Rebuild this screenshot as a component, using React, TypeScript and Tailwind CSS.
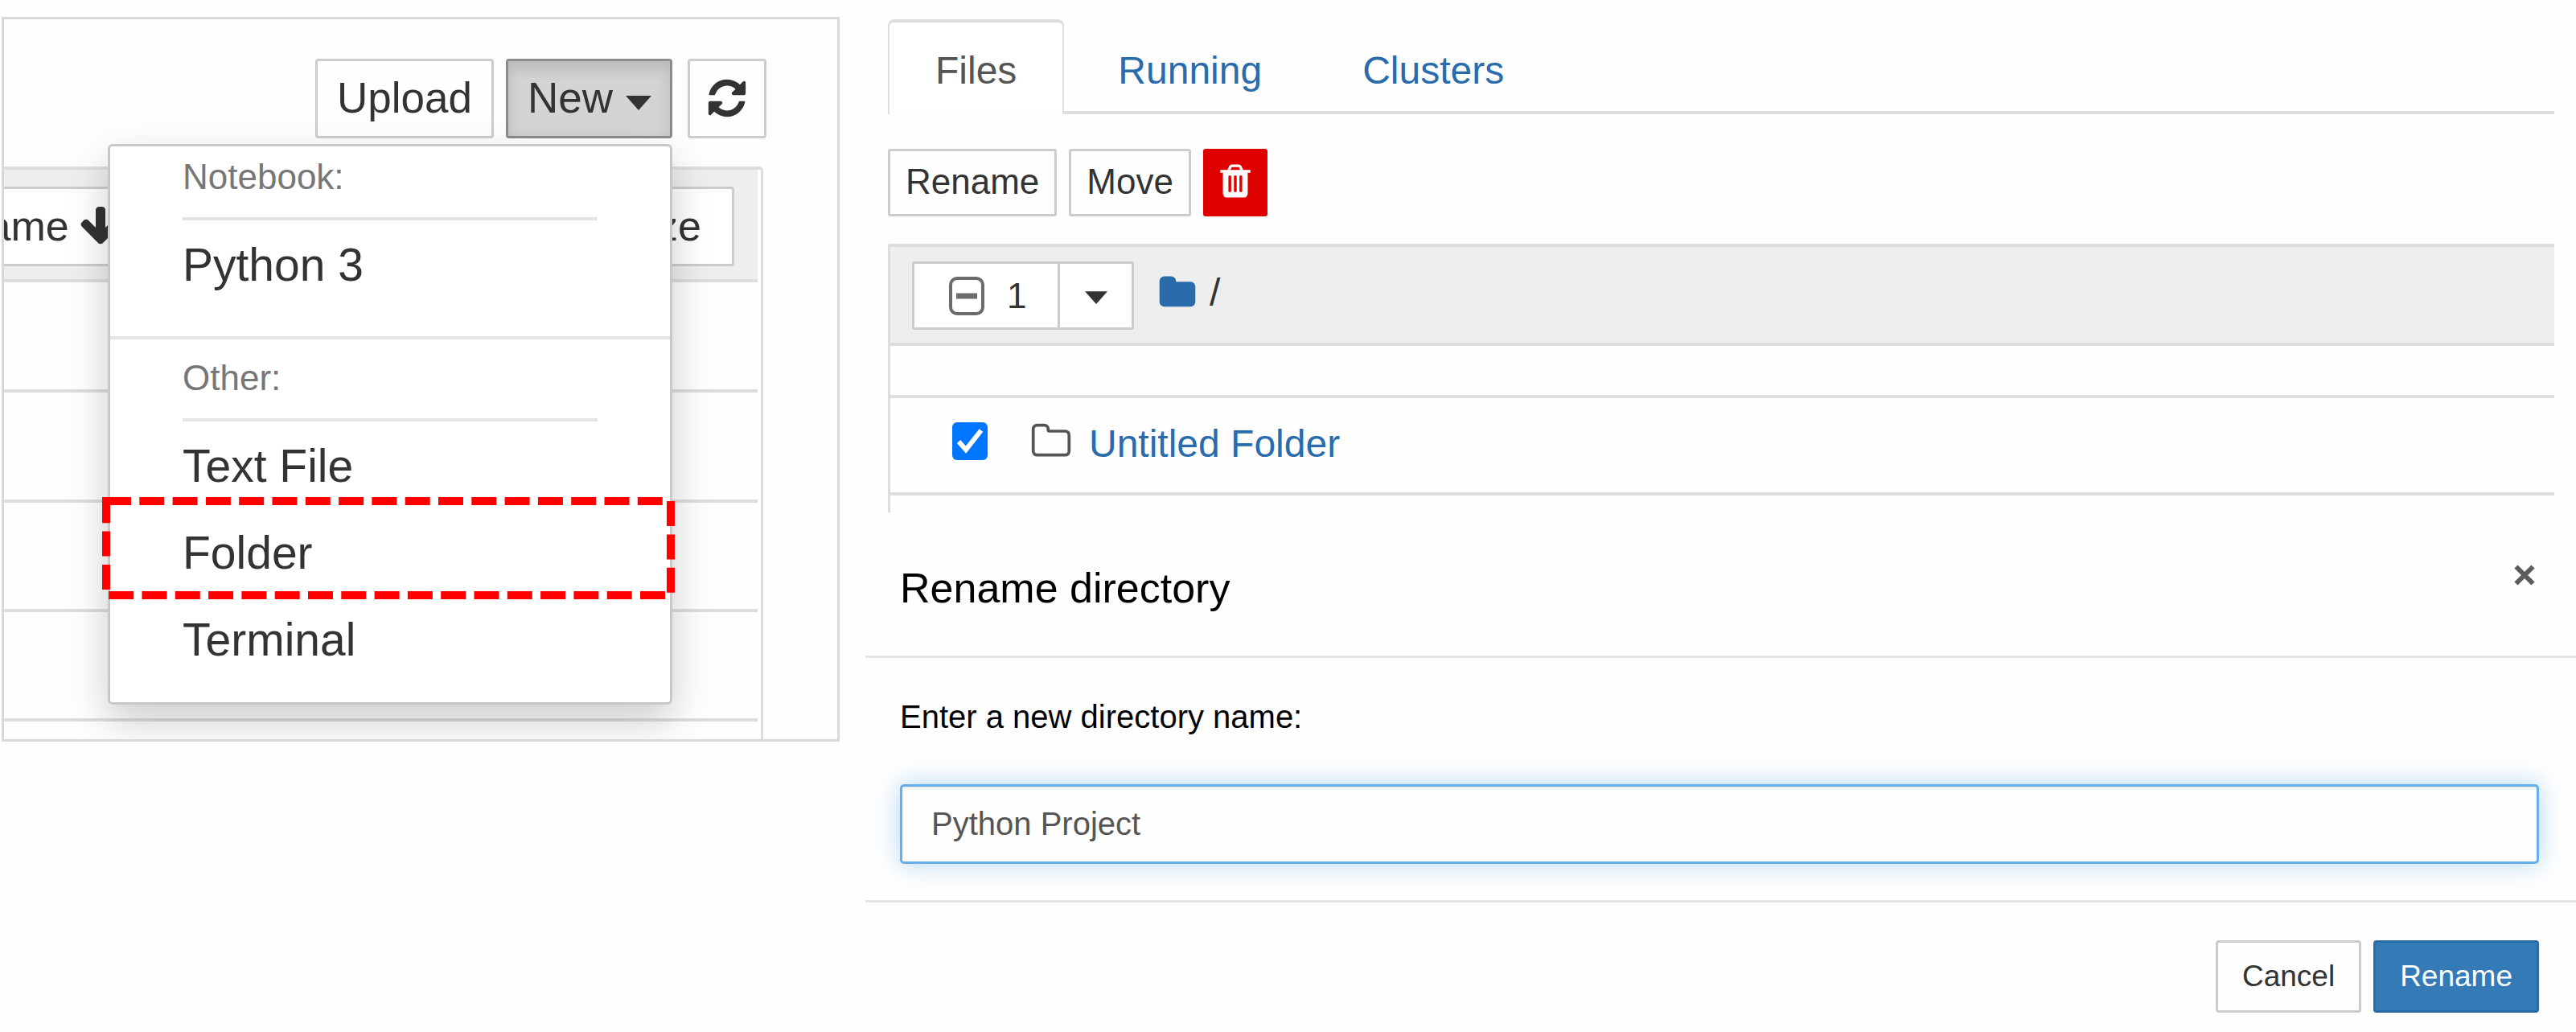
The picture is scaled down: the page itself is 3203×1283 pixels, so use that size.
import React from "react";

type IconProps = { className?: string };

function RefreshIcon({ className }: IconProps) {
  return (
    <svg viewBox="0 0 1792 1792" fill="currentColor" aria-hidden="true" className={className}>
      <path d="M1639 1056q0 5-1 7-64 268-268 434.5t-478 166.5q-146 0-282.5-55t-243.5-157l-129 129q-19 19-45 19t-45-19-19-45v-448q0-26 19-45t45-19h448q26 0 45 19t19 45-19 45l-137 137q71 66 161 102t187 36q134 0 250-65t186-179q11-17 53-117 8-23 30-23h192q13 0 22.5 9.5t9.5 22.5zm25-800v448q0 26-19 45t-45 19h-448q-26 0-45-19t-19-45 19-45l138-138q-148-137-349-137-134 0-250 65t-186 179q-11 17-53 117-8 23-30 23h-199q-13 0-22.5-9.5t-9.5-22.5v-7q65-268 270-434.5t480-166.5q146 0 284 55.5t245 156.5l130-129q19-19 45-19t45 19 19 45z" />
    </svg>
  );
}

function ArrowDownIcon({ className }: IconProps) {
  return (
    <svg viewBox="0 0 1792 1792" fill="currentColor" aria-hidden="true" className={className}>
      <path d="M1675 832q0 53-37 90l-651 652q-39 37-91 37-53 0-90-37l-651-652q-38-36-38-90 0-53 38-91l74-75q39-37 91-37 53 0 90 37l294 294v-704q0-52 38-90t90-38h128q52 0 90 38t38 90v704l294-294q37-37 90-37 52 0 91 37l75 75q37 39 37 91z" />
    </svg>
  );
}

function TrashIcon({ className }: IconProps) {
  return (
    <svg viewBox="0 0 1792 1792" fill="currentColor" aria-hidden="true" className={className}>
      <path d="M704 1376v-704q0-14-9-23t-23-9h-64q-14 0-23 9t-9 23v704q0 14 9 23t23 9h64q14 0 23-9t9-23zm256 0v-704q0-14-9-23t-23-9h-64q-14 0-23 9t-9 23v704q0 14 9 23t23 9h64q14 0 23-9t9-23zm256 0v-704q0-14-9-23t-23-9h-64q-14 0-23 9t-9 23v704q0 14 9 23t23 9h64q14 0 23-9t9-23zm-544-992h448l-48-117q-7-9-17-11h-317q-10 2-17 11zm928 32v64q0 14-9 23t-23 9h-96v948q0 83-47 143.5t-113 60.5h-832q-66 0-113-58.5t-47-141.5v-952h-96q-14 0-23-9t-9-23v-64q0-14 9-23t23-9h309l70-167q15-37 54-63t79-26h320q40 0 79 26t54 63l70 167h309q14 0 23 9t9 23z" />
    </svg>
  );
}

function FolderIcon({ className }: IconProps) {
  return (
    <svg viewBox="0 0 1792 1792" fill="currentColor" aria-hidden="true" className={className}>
      <path d="M1728 608v704q0 92-66 158t-158 66h-1216q-92 0-158-66t-66-158v-960q0-92 66-158t158-66h320q92 0 158 66t66 158v32h672q92 0 158 66t66 158z" />
    </svg>
  );
}

function FolderOutlineIcon({ className }: IconProps) {
  return (
    <svg viewBox="0 0 1792 1792" fill="currentColor" aria-hidden="true" className={className}>
      <path d="M1600 1312v-704q0-40-28-68t-68-28h-704q-40 0-68-28t-28-68v-64q0-40-28-68t-68-28h-320q-40 0-68 28t-28 68v960q0 40 28 68t68 28h1216q40 0 68-28t28-68zm128-704v704q0 92-66 158t-158 66h-1216q-92 0-158-66t-66-158v-960q0-92 66-158t158-66h320q92 0 158 66t66 158v32h672q92 0 158 66t66 158z" />
    </svg>
  );
}

function Caret({ className }: IconProps) {
  return (
    <svg viewBox="0 0 32 18" fill="currentColor" aria-hidden="true" className={className}>
      <path d="M0 0H32L16 18Z" />
    </svg>
  );
}

function MenuItem({ children, highlighted = false }: { children: React.ReactNode; highlighted?: boolean }) {
  return (
    <li className="relative">
      <button type="button" className="w-full px-[90px] py-[22px] text-left text-[57px] leading-[64px]">
        {children}
      </button>
      {highlighted && (
        <svg
          viewBox="0 0 712 127"
          fill="none"
          aria-hidden="true"
          className="pointer-events-none absolute -left-[10px] -top-[15px] h-[127px] w-[712px]"
        >
          <rect x="5" y="5" width="702" height="117" stroke="#ff0000" strokeWidth="10" strokeDasharray="31 10.3" />
        </svg>
      )}
    </li>
  );
}

function NewMenu() {
  return (
    <div className="absolute right-0 top-full z-10 mt-[7px] w-[702px] rounded-[6px] border-[3px] border-[#c8c8c8] bg-white pb-6 pt-2 shadow-[0_20px_50px_rgba(0,0,0,0.2)]">
      <h3 className="px-[90px] text-[44px] leading-[60px] text-[#777]">Notebook:</h3>
      <hr className="mx-[90px] mb-px mt-5 border-t-4 border-[#e5e5e5]" />
      <ul>
        <MenuItem>Python 3</MenuItem>
      </ul>
      <hr className="mb-[18px] mt-[35px] border-t-4 border-[#e5e5e5]" />
      <h3 className="px-[90px] text-[44px] leading-[60px] text-[#777]">Other:</h3>
      <hr className="mx-[90px] mb-px mt-5 border-t-4 border-[#e5e5e5]" />
      <ul>
        <MenuItem>Text File</MenuItem>
        <MenuItem highlighted>Folder</MenuItem>
        <MenuItem>Terminal</MenuItem>
      </ul>
    </div>
  );
}

function NotebookPanel() {
  return (
    <section className="ml-[2px] mt-[21px] self-start overflow-hidden border-[3px] border-[#d9d9d9] pt-[49px]">
      <div className="flex justify-end pr-[88px] text-[53px]">
        <button type="button" className="h-[99px] rounded-[4px] border-[3px] border-[#ccc] px-[24px] pb-[2px]">
          Upload
        </button>
        <div className="relative ml-[15px]">
          <button
            type="button"
            className="flex h-[99px] items-center gap-[15px] rounded-[4px] border-[3px] border-[#8c8c8c] bg-[#d4d4d4] pb-[2px] pl-[24px] pr-[22px] shadow-[inset_0_10px_18px_rgba(0,0,0,0.125)]"
          >
            New
            <Caret className="mt-3 h-[18px] w-[34px]" />
          </button>
          <NewMenu />
        </div>
        <button
          type="button"
          aria-label="Refresh"
          className="ml-[19px] flex h-[99px] w-[98px] items-center justify-center rounded-[4px] border-[3px] border-[#ccc] pb-[2px]"
        >
          <RefreshIcon className="h-[54px] w-[54px]" />
        </button>
      </div>

      <div className="mr-[92px] mt-[35px] rounded-tr-[5px] border-r-[3px] border-t-4 border-[#ddd] pr-1">
        <div className="flex border-b-4 border-[#ddd] bg-[#eee] pb-4 pr-[29px] pt-[21px] text-[52px]">
          <button
            type="button"
            className="-ml-[104px] flex h-[99px] flex-1 items-center gap-[11px] border-[3px] border-[#ccc] bg-white pb-[2px] pl-[43px]"
          >
            Name
            <ArrowDownIcon className="h-[56px] w-[56px]" />
          </button>
          <button
            type="button"
            className="-ml-[3px] h-[99px] rounded-r-[4px] border-[3px] border-[#ccc] bg-white px-[38px] pb-[2px]"
          >
            File size
          </button>
        </div>
        <div className="h-[137px] border-b-4 border-[#ddd]" />
        <div className="h-[137px] border-b-4 border-[#ddd]" />
        <div className="h-[136px] border-b-4 border-[#ddd]" />
        <div className="h-[136px] border-b-4 border-[#ddd]" />
        <div className="h-[22px]" />
      </div>
    </section>
  );
}

function FileBrowser() {
  return (
    <section className="ml-[28px] mr-[27px] pt-6">
      <nav className="flex gap-[9px] border-b-4 border-[#ddd] text-[48px] leading-[60px] text-[#2a6cab]">
        <a
          href="#files"
          className="-mb-1 rounded-t-[8px] border-x-2 border-t-4 border-[#ddd] bg-white px-[57px] pb-[24px] pt-[30px] text-[#555]"
        >
          Files
        </a>
        <a href="#running" className="px-[58px] pt-[34px]">
          Running
        </a>
        <a href="#clusters" className="px-[58px] pt-[34px]">
          Clusters
        </a>
      </nav>

      <div className="mt-[43px] flex gap-[15px] text-[44px]">
        <button type="button" className="h-[84px] rounded-[3px] border-[3px] border-[#ccc] px-[19px] pb-[2px]">
          Rename
        </button>
        <button type="button" className="h-[84px] rounded-[3px] border-[3px] border-[#ccc] px-[19px] pb-[2px]">
          Move
        </button>
        <button
          type="button"
          aria-label="Delete"
          className="flex h-[84px] w-[80px] items-center justify-center rounded-[3px] bg-[#df0000] pb-1 text-white"
        >
          <TrashIcon className="h-[48px] w-[48px]" />
        </button>
      </div>

      <div className="mt-[34px] rounded-tl-[3px] border-l-[3px] border-t-4 border-[#ddd] pb-[21px]">
        <div className="flex items-center border-b-4 border-[#ddd] bg-[#eee] pb-4 pl-[27px] pt-[18px]">
          <div className="flex h-[85px] rounded-[3px] border-[3px] border-[#ccc] bg-white text-[44px]">
            <button type="button" className="flex w-[178px] items-center gap-[28px] pl-[43px]">
              <svg viewBox="0 0 44 48" fill="none" stroke="#6b6b6b" strokeWidth="4" aria-hidden="true" className="h-[48px] w-[44px]">
                <rect x="2" y="2" width="40" height="44" rx="8" />
                <path d="M9 24H35" strokeWidth="7" />
              </svg>
              1
            </button>
            <button
              type="button"
              aria-label="Select options"
              className="flex w-[92px] items-center justify-center border-l-[3px] border-[#ccc]"
            >
              <Caret className="mt-1 h-[16px] w-[28px]" />
            </button>
          </div>
          <a href="#root" className="ml-[30px] flex items-center gap-4 pb-2 text-[48px] leading-[60px]">
            <FolderIcon className="h-[50px] w-[48px] text-[#2a6cab]" />
            /
          </a>
        </div>
        <div className="h-[65px] border-b-4 border-[#ddd]" />
        <div className="flex h-[121px] items-center border-b-4 border-[#ddd] pl-[77px]">
          <span className="relative mb-[10px] flex">
            <input
              id="untitled-folder"
              type="checkbox"
              defaultChecked
              aria-label="Select Untitled Folder"
              className="h-[47px] w-[44px] appearance-none rounded-[6px] bg-[#0075ff]"
            />
            <svg
              viewBox="0 0 44 47"
              fill="none"
              stroke="white"
              strokeWidth="6"
              aria-hidden="true"
              className="pointer-events-none absolute inset-0 h-[47px] w-[44px]"
            >
              <path d="M8 24L17 34L36 10" />
            </svg>
          </span>
          <FolderOutlineIcon className="mb-[10px] ml-[53px] h-[54px] w-[52px] text-[#555]" />
          <a href="#untitled" className="mb-1 ml-[21px] text-[48px] leading-[60px] text-[#2a6cab]">
            Untitled Folder
          </a>
        </div>
      </div>
    </section>
  );
}

function RenameDialog() {
  return (
    <section role="dialog" aria-labelledby="dialog-title" className="text-black">
      <header className="flex items-start justify-between border-b-[3px] border-[#e5e5e5] pb-[49px] pl-[43px] pr-[51px] pt-[59px]">
        <h2 id="dialog-title" className="text-[52px] leading-[70px]">
          Rename directory
        </h2>
        <button type="button" aria-label="Close" className="mt-[6px] text-[#5c5c5c]">
          <svg viewBox="0 0 26 26" fill="none" stroke="currentColor" strokeWidth="6" aria-hidden="true" className="h-[26px] w-[26px]">
            <path d="M2.5 2.5L23.5 23.5M23.5 2.5L2.5 23.5" />
          </svg>
        </button>
      </header>
      <div className="border-b-[3px] border-[#e5e5e5] pb-[45px] pl-[43px] pr-[46px] pt-[45px] text-[40px] leading-[56px]">
        <label htmlFor="directory-name" className="block">
          Enter a new directory name:
        </label>
        <input
          id="directory-name"
          type="text"
          defaultValue="Python Project"
          className="mt-[56px] block h-[99px] w-full rounded-[5px] border-[3px] border-[#66afe9] px-[36px] text-[#555] shadow-[inset_0_3px_3px_rgba(0,0,0,0.06),0_0_30px_rgba(102,175,233,0.5)] outline-none"
        />
      </div>
      <footer className="flex justify-end gap-[15px] pr-[46px] pt-[47px] text-[37px]">
        <button type="button" className="h-[90px] rounded-[4px] border-[3px] border-[#ccc] px-[30px] text-[#333]">
          Cancel
        </button>
        <button type="button" className="h-[90px] rounded-[4px] border-[3px] border-[#2a6ca6] bg-[#337ab7] px-[30px] text-white">
          Rename
        </button>
      </footer>
    </section>
  );
}

export default function App() {
  return (
    <main className="grid min-h-screen grid-cols-[1044fr_2127fr] gap-x-8 bg-[#fefefe] font-['Liberation_Sans',Arial,sans-serif] text-[#333]">
      <NotebookPanel />
      <div className="min-w-0">
        <FileBrowser />
        <RenameDialog />
      </div>
    </main>
  );
}
